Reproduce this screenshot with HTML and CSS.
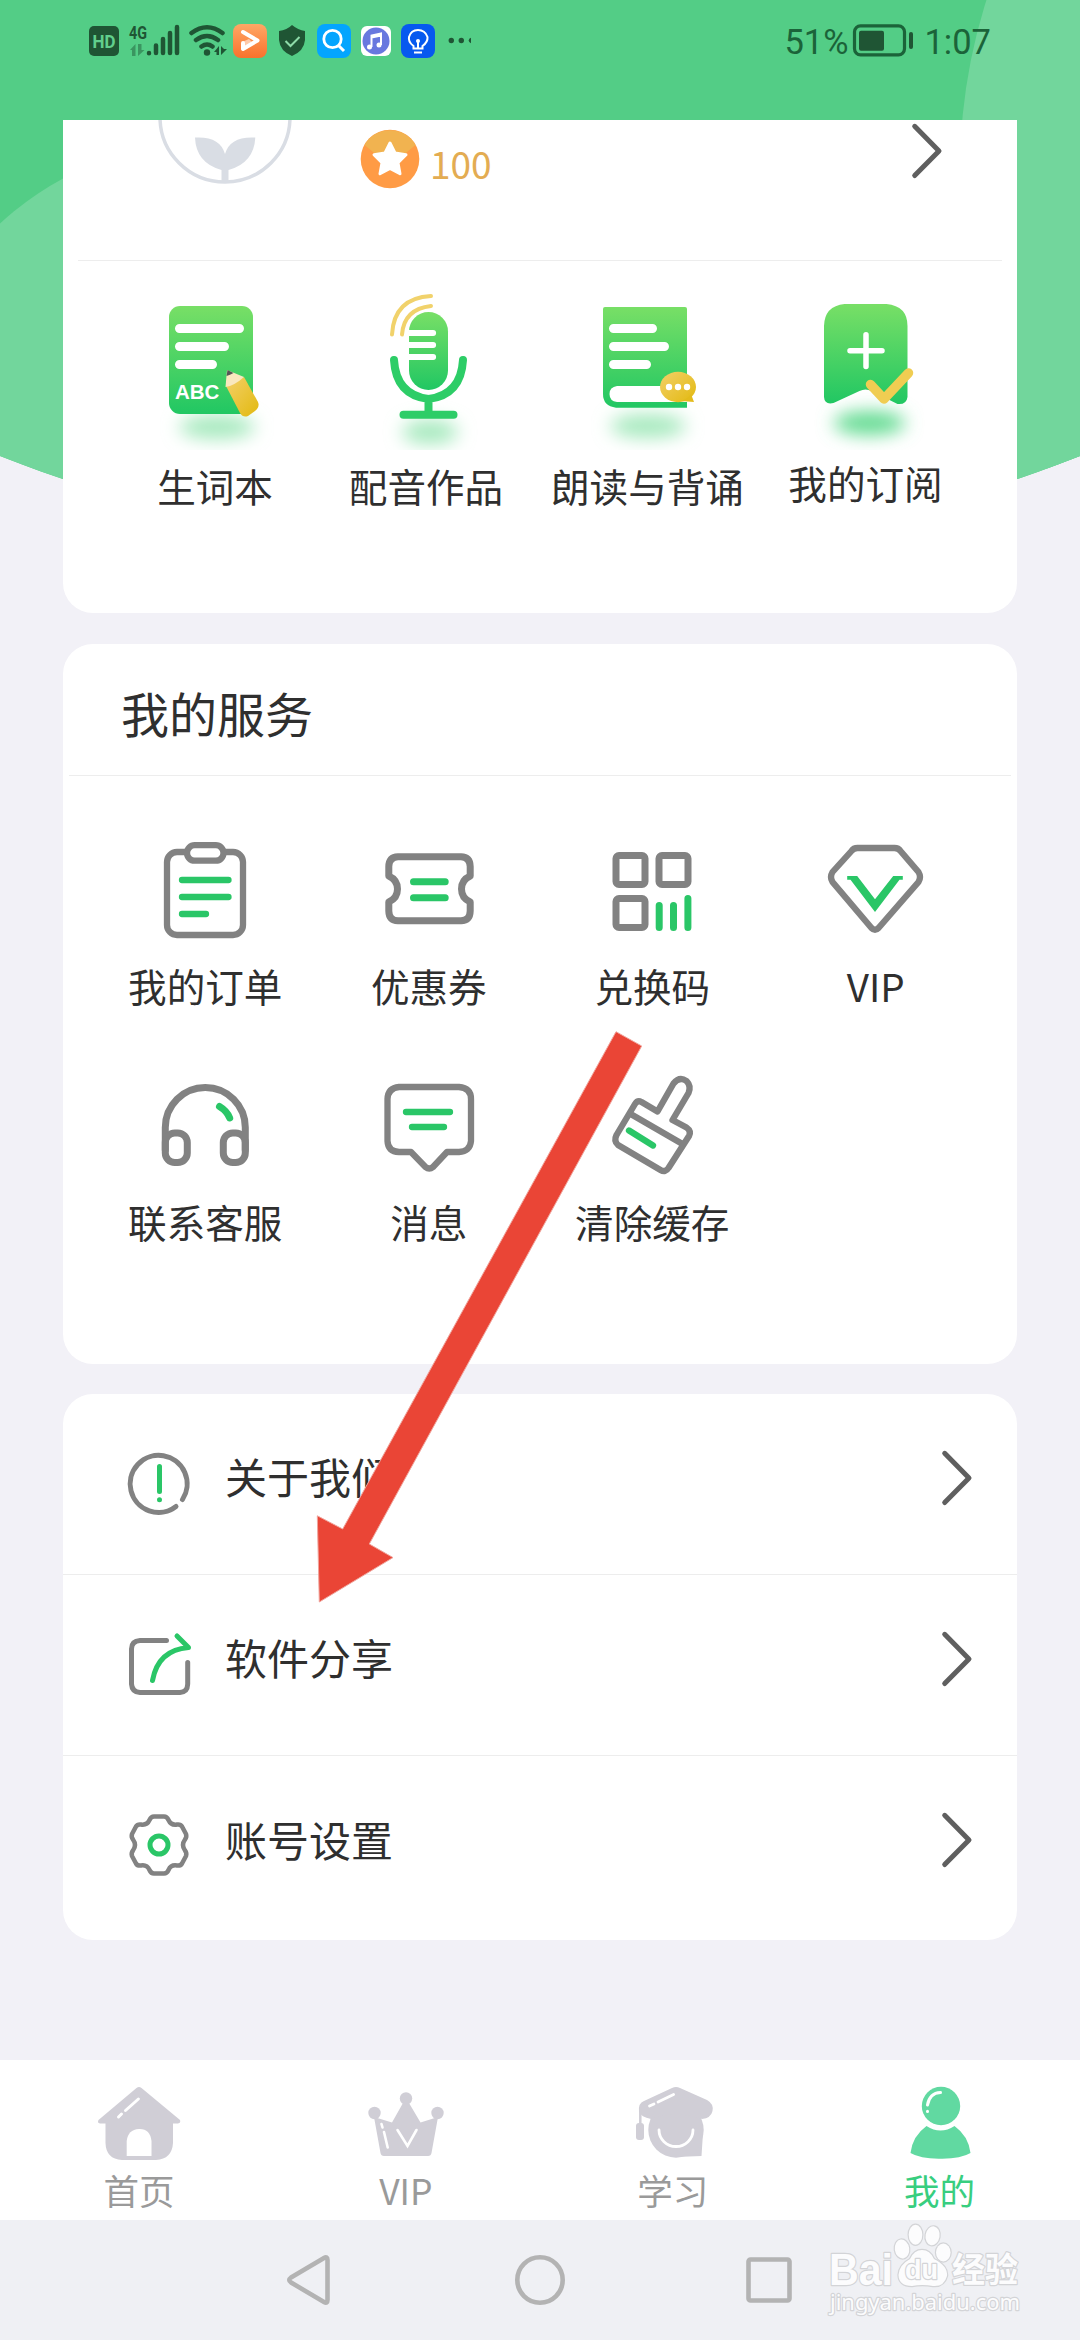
FILE: index.html
```html
<!DOCTYPE html>
<html lang="zh-CN">
<head>
<meta charset="utf-8">
<title>我的</title>
<link rel="stylesheet" href="styles.css">
</head>
<body>
<div class="screen">
  <svg class="backdrop" viewBox="0 0 1080 600">
    <defs><clipPath id="dome"><circle cx="540" cy="-923" r="1481"/></clipPath></defs>
    <g clip-path="url(#dome)">
      <rect width="1080" height="600" fill="#53cd86"/>
      <circle cx="205" cy="444" r="301" fill="#72d69c"/>
      <circle cx="1520" cy="170" r="560" fill="#72d69c"/>
      <rect x="1000" y="130" width="80" height="400" fill="#72d69c"/>
    </g>
  </svg>

  <header class="status">
    <div class="status-icons">
      <svg width="38" height="42" viewBox="89 20 38 42"><rect x="89" y="26" width="30" height="30" rx="5" fill="#1f5534"/><text x="92.5" y="48" class="hd" textLength="23" lengthAdjust="spacingAndGlyphs">HD</text></svg>
      <svg width="56" height="42" viewBox="127 20 56 42"><text x="129" y="38.500" class="net" textLength="18" lengthAdjust="spacingAndGlyphs">4G</text><g fill="#3a9560"><path d="M130 50l5.500-6v12h-3.500v-6zM138 44v12l6.500-6h-3v-6z"/></g><g stroke="#1f5534" stroke-width="4.500" stroke-linecap="round"><path d="M149 53v.2M156 45.500v7.500M163 39v14M170 33v20M177 27v26"/></g></svg>
      <svg width="46" height="42" viewBox="187 20 46 42"><g fill="none" stroke="#1f5534" stroke-width="4.500" stroke-linecap="round"><path d="M191.500 33Q207 21.500 222.500 33M196 40Q207 32 218 40M201.500 46.500Q207 42.500 212.500 46.500"/></g><circle cx="207" cy="52.500" r="3.200" fill="#1f5534"/><path d="M214 52l5-6v9h-2.500v-3zM221 46v9l6-6h-3z" fill="#1f5534"/></svg>
      <svg width="44" height="42" viewBox="229 20 44 42"><defs><linearGradient id="og" x2="0" y2="1"><stop stop-color="#ffa765"/><stop offset="1" stop-color="#f9722c"/></linearGradient></defs><rect x="233" y="24" width="34" height="34" rx="8" fill="url(#og)"/><path d="M243 32L257.500 40.500L243 49V43" fill="none" stroke="#fff" stroke-width="4" stroke-linejoin="round" stroke-linecap="round"/><path d="M242 42l7-3 3 3-9 8z" fill="#fff" opacity=".55"/></svg>
      <svg width="42" height="42" viewBox="273 20 42 42"><path d="M292 25Q298 30 305 31V40Q304 51 292 56Q280 51 279 40V31Q287 30 292 25Z" fill="#1f5534"/><path d="M285.500 41l5 5 9-9" fill="none" stroke="#8edba9" stroke-width="2"/></svg>
      <svg width="42" height="42" viewBox="315 20 42 42"><rect x="317" y="24" width="34" height="34" rx="8" fill="#04a5fe"/><circle cx="332.500" cy="39" r="8.700" fill="none" stroke="#fff" stroke-width="2.800"/><path d="M338.500 45.500l5.500 5.500" stroke="#fff" stroke-width="3"/></svg>
      <svg width="40" height="42" viewBox="357 20 40 42"><rect x="361" y="26" width="30" height="30" rx="6" fill="#fff"/><circle cx="376" cy="41" r="13.500" fill="#6878df"/><path d="M371.500 47V35.500l9.500-2V45M371.500 37.500l9.500-2" fill="none" stroke="#fff" stroke-width="2"/><circle cx="369.500" cy="47" r="2.500" fill="#fff"/><circle cx="379" cy="45" r="2.500" fill="#fff"/></svg>
      <svg width="76" height="42" viewBox="397 20 76 42"><rect x="401" y="24" width="34" height="34" rx="8" fill="#0759ef"/><path d="M413.500 46Q408 42 409 37Q411 30 418 30T427.500 37Q428 42 422.500 46V48.500H413.500ZM414 52.500h8M418 41v7" fill="none" stroke="#fff" stroke-width="2"/><circle cx="418" cy="41" r="2" fill="#fff"/><g fill="#1f5534"><circle cx="451.300" cy="40.500" r="2.700"/><circle cx="461.300" cy="40.500" r="2.700"/><path d="M471 37.800v5.400q-2.300-.8-2.300-2.700t2.300-2.700z"/></g></svg>
    </div>
    <div class="status-right">
      <span>51%</span>
      <svg width="64" height="42" viewBox="851 20 64 42"><rect x="854.500" y="25.800" width="50" height="29" rx="6" fill="none" stroke="#1b6339" stroke-width="3.200"/><rect x="859" y="30.700" width="25" height="20" rx="2" fill="#1f5534"/><rect x="909" y="32" width="4" height="17" rx="2" fill="#1f5534"/></svg>
      <span class="time">1:07</span>
    </div>
  </header>

  <main class="content">
    <section class="card profile">
      <div class="profile-row">
        <svg class="avatar" width="140" height="140" viewBox="155 120 140 140"><circle cx="225" cy="117" r="65" fill="none" stroke="#d9dde4" stroke-width="3.500"/><path d="M221.500 183V170Q196 163 195 137.500Q220 136 225 154Q230 136 255.300 137.500Q254 163 228.500 170V183Z" fill="#d9dde4"/></svg>
        <svg width="60" height="66" viewBox="360 126 60 66"><circle cx="390" cy="159" r="29.300" fill="#ff9b45"/><path d="M390 166L364.500 145A29.300 29.300 0 0 1 415.500 145Z" fill="#f1b350"/><path d="M390 143l5 10 11 1.700-8 8 2 11-10-5.200-10 5.200 2-11-8-8 11-1.700z" fill="#fff" stroke="#fff" stroke-width="3" stroke-linejoin="round"/></svg>
        <span class="points">100</span>
        <svg class="chev-top" width="36" height="60" viewBox="909 120 36 60"><path class="chev" d="M914.700 126.300L939 151L914.700 175.500"/></svg>
      </div>
      <div class="shortcuts">
        <div class="cell">
          <svg width="140" height="165" viewBox="145 285 140 165">
            <defs>
              <linearGradient id="gr" x1="0" y1="0" x2="0" y2="1"><stop stop-color="#78df66"/><stop offset="1" stop-color="#21c763"/></linearGradient>
              <linearGradient id="ye" x1="0" y1="0" x2="1" y2="1"><stop stop-color="#f3d069"/><stop offset="1" stop-color="#e2b90f"/></linearGradient>
              <filter id="soft" x="-50%" y="-150%" width="200%" height="400%"><feGaussianBlur stdDeviation="9"/></filter>
            </defs>
            <ellipse cx="217" cy="427" rx="38" ry="12" fill="#a5e9bd" filter="url(#soft)"/>
            <rect x="169" y="306" width="84" height="108" rx="11" fill="url(#gr)"/>
            <path d="M179.500 328.500H239.500M179.500 346.500H224.500M179.500 364.500H212.500" stroke="#fff" stroke-width="9" stroke-linecap="round"/>
            <text x="175" y="398.800" class="abc">ABC</text>
            <path d="M226 386L244 377L258 402Q260 407 255 411L248 416Q243 418 240 413Z" fill="url(#ye)"/>
            <path d="M227 370L225.500 387Q234 386 244 377Z" fill="#f9e8be"/><path d="M227.500 370L226.500 376Q230 375 233.500 373Z" fill="#555"/>
          </svg>
          <span>生词本</span>
        </div>
        <div class="cell">
          <svg width="140" height="165" viewBox="356 285 140 165">
            <ellipse cx="430" cy="432" rx="28" ry="12" fill="#a5e9bd" filter="url(#soft)"/>
            <rect x="409" y="312" width="39" height="78" rx="19.500" fill="url(#gr)"/>
            <path d="M409 333H433M409 345H433M409 357H433" stroke="#fff" stroke-width="6"/><path d="M433 333h.1M433 345h.1M433 357h.1" stroke="#fff" stroke-width="6" stroke-linecap="round"/>
            <path d="M394 360Q396 395 428.500 399Q461 395 463 360M428.500 399V413M403.500 414.700H453.500" fill="none" stroke="#2dcd67" stroke-width="8" stroke-linecap="round"/>
            <path d="M392 334.500Q394 298 431 296M402 334.500Q404 309 431 306" fill="none" stroke="#f1d26b" stroke-width="4" stroke-linecap="round"/>
          </svg>
          <span>配音作品</span>
        </div>
        <div class="cell">
          <svg width="140" height="165" viewBox="577 285 140 165">
            <ellipse cx="647" cy="426" rx="38" ry="12" fill="#a5e9bd" filter="url(#soft)"/>
            <path d="M604 307H684Q686 307 686 309V407.700H615Q602 406 602 394V309Q602 307 604 307Z" fill="url(#gr)"/>
            <path d="M612.500 328.500H651.500M612.500 346.500H663.500M612.500 364.500H645.500" stroke="#fff" stroke-width="9" stroke-linecap="round"/>
            <path d="M686 386H616Q608.500 387 608.500 394T616 402H686Z" fill="#fff"/>
            <ellipse cx="677" cy="387" rx="18" ry="15.200" fill="url(#ye)"/><path d="M680 401Q687 399 690 394L693 402Z" fill="#e3bb1c"/>
            <g fill="#fff"><circle cx="668" cy="387" r="3.200"/><circle cx="677" cy="387" r="3.200"/><circle cx="686" cy="387" r="3.200"/></g>
          </svg>
          <span>朗读与背诵</span>
        </div>
        <div class="cell raised">
          <svg width="140" height="165" viewBox="795.500 285 140 165">
            <ellipse cx="869" cy="423" rx="36" ry="12" fill="#63db92" filter="url(#soft)"/>
            <path d="M844 304H886Q907 306 907 326V397Q906 405 897 404L871 391Q865 388 859 391L833 403Q824 405 823.500 397V326Q824 306 844 304Z" fill="url(#gr)"/>
            <path d="M849.500 350.700H881.500M865.500 334.700V366.500" stroke="#fff" stroke-width="5.500" stroke-linecap="round"/>
            <path d="M870 384.500L883.500 399L908 373" fill="none" stroke="#f0cd52" stroke-width="9.500" stroke-linecap="round" stroke-linejoin="round"/>
          </svg>
          <span>我的订阅</span>
        </div>
      </div>
    </section>

    <section class="card services">
      <h2>我的服务</h2>
      <div class="grid">
        <div class="cell"><svg class="line" viewBox="145 830 120 120"><g class="g"><rect x="167" y="852" width="76" height="83" rx="10"/><rect x="187" y="845.200" width="36.500" height="15.500" rx="7.700" fill="#fff"/></g><path class="a" d="M182 880H228.500M182 897H228.500M182 914H206"/></svg><span>我的订单</span></div>
        <div class="cell"><svg class="line" viewBox="369 830 120 120"><path class="g w7" d="M388.800 876V866.500Q389 857 398 856.700H461Q470 857 470.200 866.500V876Q461.500 880 461.500 889T470.200 902V911Q470 920.500 461 920.800H398Q389 920.500 388.800 911V902Q397.500 898 397.500 889T388.800 876Z"/><path class="a w7" d="M413.500 881.700H445.200M413.500 897.700H445.200"/></svg><span>优惠券</span></div>
        <div class="cell"><svg class="line" viewBox="592.500 830 120 120"><g class="g w7"><rect x="616.500" y="855.500" width="29" height="29" rx="3"/><rect x="659.500" y="855.500" width="29" height="29" rx="3"/><rect x="616.500" y="898.500" width="29" height="29" rx="3"/></g><path class="a w7" d="M659.700 905.500V927.500M674 905.500V927.500M688.400 898.500V927.500"/></svg><span>兑换码</span></div>
        <div class="cell"><svg class="line" viewBox="815.500 830 120 120"><path class="g" d="M857 848H894Q898 848 900 851L918 872Q921 877 918 882L878 928Q874.500 931.500 871 928L832 882Q829 877 832 872L851 851Q853 848 857 848Z"/><path fill="#2ac667" d="M846.700 876H856.700L874.500 899.300L892.700 876H902.300V879.700H899L874.500 912L850 879.700H846.700Z"/></svg><span>VIP</span></div>
        <div class="cell"><svg class="line" viewBox="145 1066 120 120"><g class="g w7"><path d="M165.300 1150V1127.500A40 40 0 0 1 245.300 1127.500V1150"/><rect x="165.300" y="1133" width="22" height="29.500" rx="9.500"/><rect x="223.300" y="1133" width="22" height="29.500" rx="9.500"/></g><path class="a w7" d="M219.500 1106.500Q227 1111 229.700 1118"/></svg><span>联系客服</span></div>
        <div class="cell"><svg class="line" viewBox="369 1066 120 120"><path class="g" d="M399 1087H459Q471 1088 471 1099V1141Q470 1151.500 459 1152H447L433 1167Q429.300 1170 425.500 1167L411 1152H399Q388 1151.500 387.500 1141V1099Q388 1088 399 1087Z"/><path class="a" d="M406 1112H450M412 1127H444"/></svg><span>消息</span></div>
        <div class="cell"><svg class="line" viewBox="592.500 1066 120 120"><path class="g" d="M642 1102L658 1111.500L674 1083.500Q680 1076 687 1081Q692 1086 689 1093L673 1120L687 1127.500Q692 1131 689.500 1136L669 1168Q666 1173 661 1170L618.500 1145Q614 1141 617 1135L635.500 1104Q638 1100 642 1102ZM632 1114.500L683 1144"/><path class="a" d="M629.500 1130.500L653.500 1145.500"/></svg><span>清除缓存</span></div>
      </div>
    </section>

    <section class="card list">
      <div class="row">
        <svg width="70" height="70" viewBox="126 1448 70 70"><path d="M182.500 1499.500A28.500 28.500 0 1 0 176 1506.500" fill="none" stroke="#828282" stroke-width="5" stroke-linecap="round"/><path class="a w5" d="M159.500 1466.500V1491.500M159.500 1499.700v.1"/></svg>
        <span>关于我们</span>
        <svg class="arrow" width="36" height="60" viewBox="909 121 36 60"><path class="chev" d="M914.700 126.300L939 151L914.700 175.500"/></svg>
      </div>
      <div class="row">
        <svg width="70" height="70" viewBox="126 1629 70 70"><path d="M166.500 1640.500H140Q131.500 1641 131.500 1649V1684Q132 1692 140 1692.500H180Q187.500 1692 187.700 1684V1662.500" fill="none" stroke="#828282" stroke-width="5" stroke-linecap="round"/><path class="a w5" d="M152.500 1680.500Q158 1650 188.500 1647.500L177 1636"/></svg>
        <span>软件分享</span>
        <svg class="arrow" width="36" height="60" viewBox="909 121 36 60"><path class="chev" d="M914.700 126.300L939 151L914.700 175.500"/></svg>
      </div>
      <div class="row">
        <svg width="70" height="70" viewBox="-33 -35 70 70"><path d="M-5-28.500H5Q8-28.500 9.500-25Q12-19.500 18-20.500Q21.500-21 23-18.500L27-11Q28-8 26-5.500Q22 0 26 5.500Q28 8 27 11L23 18.500Q21.500 21 18 20.500Q12 19.500 9.500 25Q8 28.500 5 28.500H-5Q-8 28.500-9.500 25Q-12 19.500-18 20.500Q-21.500 21-23 18.500L-27 11Q-28 8-26 5.500Q-22 0-26-5.500Q-28-8-27-11L-23-18.500Q-21.500-21-18-20.500Q-12-19.500-9.500-25Q-8-28.500-5-28.500Z" fill="none" stroke="#828282" stroke-width="4.500" stroke-linejoin="round"/><circle class="a w5" r="9"/></svg>
        <span>账号设置</span>
        <svg class="arrow" width="36" height="60" viewBox="909 121 36 60"><path class="chev" d="M914.700 126.300L939 151L914.700 175.500"/></svg>
      </div>
    </section>
  </main>

  <nav class="tabs">
    <div class="tab"><svg width="100" height="88" viewBox="89 2080 100 88"><path fill="#d0ced6" d="M136.500 2088Q139 2086 141.500 2088L180 2120Q181 2123 178 2123.500H173V2143Q172 2159 156 2160H122Q106 2159 105.500 2143V2123.500H100Q97 2123 98.500 2120Z"/><path fill="#fff" d="M126.700 2156V2141Q128 2129.500 139 2129T151.500 2141V2156Z"/><path d="M138.400 2099L125.500 2110.500M121.500 2114L118.500 2117" stroke="#fff" stroke-width="3" stroke-linecap="round"/></svg><span>首页</span></div>
    <div class="tab"><svg width="100" height="88" viewBox="356 2080 100 88"><g fill="#d0ced6"><circle cx="374.500" cy="2113" r="6.200"/><circle cx="406" cy="2098.500" r="6.200"/><circle cx="437.500" cy="2113" r="6.200"/><path d="M374 2117L392 2122.500L403 2103H409L420.500 2122.500L438 2117L431.500 2153Q431 2156 428 2156H384Q381 2156 380.500 2153Z"/></g><path d="M397.500 2130L407.500 2146L416.500 2130M381.500 2124L382.500 2127.500M384 2132L387.700 2147.500" fill="none" stroke="#fff" stroke-width="2.600" stroke-linecap="round"/></svg><span>VIP</span></div>
    <div class="tab"><svg width="100" height="88" viewBox="622 2080 100 88"><g fill="#d0ced6"><circle cx="675" cy="2130" r="27.700"/><path d="M675 2157L702 2133L700.500 2156ZM671 2088Q675 2086 679 2088L706 2100Q713 2104 711.500 2111Q710 2118 701 2119Q675 2110 650 2119Q640 2117 638 2112Q637 2103 643 2101Z"/><rect x="635" y="2123" width="8" height="17" rx="3"/></g><path d="M639.300 2108V2126" stroke="#d0ced6" stroke-width="2.500"/><path d="M658 2130A17 16.500 0 0 0 692 2130M672.600 2094.500L657 2102M653 2104L648.500 2106" fill="none" stroke="#fff" stroke-width="2.800" stroke-linecap="round"/></svg><span>学习</span></div>
    <div class="tab active"><svg width="100" height="88" viewBox="889.500 2080 100 88"><g fill="#61d9a1"><circle cx="940.500" cy="2106" r="19.200"/><path d="M926 2126Q940 2135 954 2126Q968 2136 970 2153Q960 2159 940 2158.700Q920 2159 910 2153Q912 2136 926 2126Z"/></g><path d="M927 2105Q929 2093 940 2092.500M927 2111.300v.1" fill="none" stroke="#fff" stroke-width="3" stroke-linecap="round"/></svg><span>我的</span></div>
  </nav>

  <footer class="sysnav">
    <svg width="60" height="60" viewBox="280 2250 60 60"><path d="M327.500 2260V2300Q327.500 2304 324 2302L291 2282.500Q287.500 2280 291 2277.500L324 2258Q327.500 2256 327.500 2260Z"/></svg>
    <svg width="60" height="60" viewBox="510 2250 60 60"><circle cx="540" cy="2280" r="22.700"/></svg>
    <svg width="60" height="60" viewBox="739 2250 60 60"><rect x="748.500" y="2259.500" width="41" height="41" rx="2"/></svg>
    <div class="watermark">
      <svg width="210" height="100" viewBox="820 2222 210 100">
        <g class="wm">
          <text x="829" y="2284.500" class="wm-bai" textLength="64" lengthAdjust="spacingAndGlyphs">Bai</text>
          <ellipse cx="902" cy="2249" rx="7.200" ry="9.500" transform="rotate(-8 902 2249)"/><ellipse cx="915.500" cy="2234.700" rx="6.800" ry="10"/><ellipse cx="932.700" cy="2235.700" rx="7" ry="9.500" transform="rotate(10 932 2235)"/><ellipse cx="943.300" cy="2252.500" rx="7.300" ry="9"/>
          <path d="M922 2250Q930 2250 934 2259Q948 2266 947 2276Q944 2287 933 2286Q922 2284 912 2286Q899 2286 898.500 2275Q899 2265 910 2259Q914 2250 922 2250Z"/>
          <text x="905" y="2279" class="wm-du" textLength="33" lengthAdjust="spacingAndGlyphs">du</text>
          <text x="952" y="2282" class="wm-cn" textLength="66" lengthAdjust="spacingAndGlyphs">经验</text>
          <text x="830" y="2310" class="wm-url" textLength="190" lengthAdjust="spacingAndGlyphs">jingyan.baidu.com</text>
        </g>
      </svg>
    </div>
  </footer>

  <svg class="pointer" viewBox="310 1025 340 585"><path d="M319.300 1602L317.300 1515.800L342.700 1529L616 1031.700L641.700 1046L369.300 1544L393 1557.600Z" fill="#ea4536" stroke="#f0a59d" stroke-width="1"/></svg>
</div>
</body>
</html>
```
FILE: styles.css
```css
* { box-sizing: border-box; }
body { margin: 0; font-family: "Noto Sans CJK SC", sans-serif; color: #2f2f2f; }
svg { display: block; flex: none; }
.screen { position: relative; width: 1080px; height: 2340px; overflow: hidden; background: #f2f1f7; display: flex; flex-direction: column; }
.backdrop { position: absolute; top: 0; left: 0; width: 1080px; height: 600px; }
.pointer { position: absolute; left: 310px; top: 1025px; width: 340px; height: 585px; }

.status { position: relative; height: 120px; padding: 20px 89px 0 89px; display: flex; justify-content: space-between; align-items: flex-start; }
.status-icons, .status-right { display: flex; align-items: center; height: 42px; }
.status-right { font: 34.5px/42px Roboto, sans-serif; color: #1b6339; }
.status-right svg { margin: 0 9px 0 3px; }
.status-right span { position: relative; top: 1px; }
.hd { font: bold 19px Roboto, sans-serif; fill: #62cf8d; }
.net { font: bold 18px Roboto, sans-serif; fill: #1f5534; }
.status-icons svg:nth-child(3) { margin-left: 4px; margin-right: -4px; }

.content { position: relative; flex: 1; padding: 0 63px; }
.card { background: #fff; border-radius: 30px; }
.profile { height: 493px; border-radius: 0 0 30px 30px; }
.profile-row { height: 141px; margin: 0 15px; padding-left: 77px; display: flex; align-items: flex-start; border-bottom: 1px solid #ededed; }
.profile-row .avatar { margin-right: 65px; }
.profile-row > svg:nth-child(2) { margin-top: 6px; }
.points { margin: 19px 0 0 10px; font-size: 37px; line-height: 48px; color: #e3ac52; }
.chev-top { margin-left: auto; margin-right: 57px; }
.chev { fill: none; stroke: #5f5f5f; stroke-width: 5; stroke-linecap: round; stroke-linejoin: round; }
.shortcuts { display: grid; grid-template-columns: 214px 208px 235px 201px; padding: 24px 0 0 45px; }
.cell { display: flex; flex-direction: column; align-items: center; }
.cell span { font-size: 38.6px; line-height: 50px; white-space: nowrap; }
.shortcuts span { margin-top: 10px; }
.shortcuts .raised span { margin-top: 7px; }
.abc { font: bold 20.5px "Liberation Sans", sans-serif; fill: #fff; }

.services { height: 720px; margin-top: 31px; }
.services h2 { margin: 0 6px; padding: 40px 0 0 52px; height: 132px; font-size: 48px; font-weight: 400; line-height: 56px; border-bottom: 1px solid #ededed; }
.grid { display: grid; grid-template-columns: repeat(4, 223.5px); grid-auto-rows: 236px; padding: 54px 0 0 30.5px; }
.grid span { margin-top: 10px; }
.line { width: 120px; height: 120px; }
.g { fill: none; stroke: #828282; stroke-width: 6.3; stroke-linejoin: round; stroke-linecap: round; }
.a { fill: none; stroke: #2ac667; stroke-width: 6.3; stroke-linecap: round; stroke-linejoin: round; }
.w7 { stroke-width: 7; }
.w5 { stroke-width: 5; }

.list { height: 546px; margin-top: 30px; }
.row { height: 181px; padding: 0 42px 0 63px; display: flex; align-items: center; border-bottom: 1px solid #ededed; }
.row:last-child { border-bottom: 0; height: 184px; }
.row > svg:first-child { margin-top: -3px; }
.row span { margin-left: 29px; font-size: 42px; line-height: 56px; margin-top: -16px; }
.row .arrow { margin-left: auto; margin-top: -12px; }
.row:last-child > svg:first-child { margin-top: -6px; }
.row:last-child .arrow { margin-top: -16px; }
.row:last-child span { margin-top: -18px; }

.tabs { position: relative; height: 160px; background: #fff; padding: 20px 7px 0 5.5px; display: grid; grid-template-columns: repeat(4, 1fr); }
.tab { display: flex; flex-direction: column; align-items: center; font-size: 35.5px; line-height: 44px; color: #9a9a9a; }
.tab.active { color: #38ce7f; }

.sysnav { position: relative; height: 120px; background: #eff0f4; display: flex; align-items: flex-start; padding: 30px 0 0 280px; gap: 169.5px; }
.sysnav > svg { fill: none; stroke: #b3b3b3; stroke-width: 4.6; stroke-linejoin: round; }
.watermark { position: absolute; left: 820px; top: 2px; }
.wm { fill: #fcfcfd; stroke: #d3d4d7; stroke-width: 2.4; stroke-linejoin: round; paint-order: stroke; }
.wm-bai { font: bold 45px "Liberation Sans", sans-serif; }
.wm-du { font: bold 27px "Liberation Sans", sans-serif; }
.wm-cn { font: bold 34px "Noto Sans CJK SC", sans-serif; }
.wm-url { font: 22px "Noto Sans", sans-serif; }
```
